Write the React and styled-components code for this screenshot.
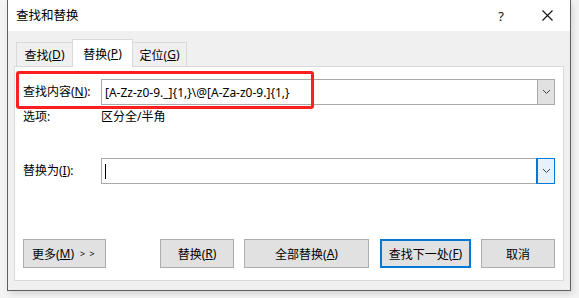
import React from "react";
import styled, { createGlobalStyle } from "styled-components";

const Global = createGlobalStyle`
  html, body { margin: 0; padding: 0; }
  body {
    background: #f3f3f3;
    font-family: "Noto Sans", "Noto Sans CJK SC", sans-serif;
    font-size: 12px;
    color: #000;
  }
`;

const Page = styled.div`
  width: 579px;
  height: 298px;
  padding-left: 7px;
  box-sizing: border-box;
  overflow: hidden;
`;

const Win = styled.div`
  width: 564px;
  height: 291px;
  box-sizing: border-box;
  border: 1px solid #5e5e5e;
  border-top: none;
  background: #f0f0f0;
  display: flex;
  flex-direction: column;
  box-shadow: 2px 3px 6px rgba(0, 0, 0, 0.12);
`;

const TitleBar = styled.div`
  height: 31px;
  background: #fff;
  display: flex;
  align-items: center;
  padding-left: 8px;
  flex-shrink: 0;
`;

const Title = styled.div`
  flex: 1;
  font-size: 12.5px;
  line-height: 16px;
`;

const TitleBtn = styled.div`
  width: 46px;
  height: 31px;
  display: flex;
  align-items: center;
  justify-content: center;
  font-size: 13px;
  color: #111;
`;

const Body = styled.div`
  flex: 1;
  padding: 9px 6px 9px 6px;
  display: flex;
  flex-direction: column;
`;

const Tabs = styled.div`
  display: flex;
  align-items: flex-end;
  padding-left: 2px;
  height: 27px;
  position: relative;
  z-index: 1;
  margin-bottom: -1px;
`;

const Tab = styled.div`
  height: ${(p) => (p.$active ? "28px" : "25px")};
  box-sizing: border-box;
  flex-shrink: 0;
  white-space: nowrap;
  display: flex;
  align-items: center;
  justify-content: center;
  background: ${(p) => (p.$active ? "#fff" : "#f0f0f0")};
  border: 1px solid #d9d9d9;
  border-bottom: ${(p) => (p.$active ? "none" : "1px solid #d9d9d9")};
  margin-left: ${(p) => (p.$first ? "0" : "-1px")};
  width: ${(p) => p.$w}px;
`;

const U = styled.span`
  text-decoration: underline;
  text-underline-offset: 1px;
`;

const Panel = styled.div`
  flex: 1;
  background: #fff;
  border: 1px solid #d9d9d9;
  padding: 12px 7px 12px 8px;
  display: flex;
  flex-direction: column;
  position: relative;
`;

const FieldGrid = styled.div`
  display: grid;
  grid-template-columns: 78px 454px;
  align-items: center;
`;

const Label = styled.div`
  line-height: 16px;
  white-space: nowrap;
`;

const Combo = styled.div`
  height: 26px;
  box-sizing: border-box;
  border: 1px solid #a9a9a9;
  display: flex;
  align-items: stretch;
  background: #fff;
`;

const ComboText = styled.div`
  flex: 1;
  padding-left: 3px;
  display: flex;
  align-items: center;
  font-size: 12px;
  white-space: nowrap;
`;

const Caret = styled.div`
  width: 1px;
  height: 15px;
  background: #000;
`;

const DropBtn = styled.div`
  width: 17px;
  box-sizing: border-box;
  display: flex;
  align-items: center;
  justify-content: center;
  background: ${(p) => (p.$focus ? "#e5f1fb" : "#e1e1e1")};
  border-left: 1px solid ${(p) => (p.$focus ? "#0078d7" : "#a9a9a9")};
  outline: ${(p) => (p.$focus ? "1px solid #0078d7" : "none")};
`;

const OptionsRow = styled(FieldGrid)`
  margin-top: 4px;
  height: 16px;
`;

const ReplaceRow = styled(FieldGrid)`
  margin-top: 33px;
`;

const Buttons = styled.div`
  margin-top: auto;
  display: flex;
  align-items: center;
`;

const Btn = styled.div`
  height: 29px;
  width: ${(p) => p.$w}px;
  margin-left: ${(p) => p.$ml || 0}px;
  flex-shrink: 0;
  white-space: nowrap;
  box-sizing: border-box;
  border: ${(p) => (p.$default ? "2px solid #0078d7" : "1px solid #adadad")};
  background: #e1e1e1;
  display: flex;
  align-items: center;
  justify-content: ${(p) => (p.$left ? "flex-start" : "center")};
  padding-left: ${(p) => (p.$left ? "8px" : "0")};
`;

const Arrows = styled.span`
  font-size: 9px;
  margin-left: 6px;
  letter-spacing: 1px;
`;

const Highlight = styled.div`
  position: absolute;
  left: 1px;
  top: 4px;
  width: 298px;
  height: 38px;
  box-sizing: border-box;
  border: 3px solid #ff1f1f;
  border-radius: 3px;
  pointer-events: none;
`;

const Chevron = () => (
  <svg width="9" height="6" viewBox="0 0 9 6">
    <path d="M1 1 L4.5 4.5 L8 1" fill="none" stroke="#444" strokeWidth="1" />
  </svg>
);

const Close = () => (
  <svg width="11" height="11" viewBox="0 0 11 11">
    <path d="M0.5 0.5 L10.5 10.5 M10.5 0.5 L0.5 10.5" stroke="#111" strokeWidth="1.1" />
  </svg>
);

export default function App() {
  return (
    <>
      <Global />
      <Page>
        <Win>
          <TitleBar>
            <Title>查找和替换</Title>
            <TitleBtn>?</TitleBtn>
            <TitleBtn>
              <Close />
            </TitleBtn>
          </TitleBar>
          <Body>
            <Tabs>
              <Tab $first $w={57}>
                查找(<U>D</U>)
              </Tab>
              <Tab $active $w={61}>
                替换(<U>P</U>)
              </Tab>
              <Tab $w={55}>
                定位(<U>G</U>)
              </Tab>
            </Tabs>
            <Panel>
              <Highlight />
              <FieldGrid>
                <Label>
                  查找内容(<U>N</U>):
                </Label>
                <Combo>
                  <ComboText>[A-Zz-z0-9._]{"{1,}"}\@[A-Za-z0-9.]{"{1,}"}</ComboText>
                  <DropBtn>
                    <Chevron />
                  </DropBtn>
                </Combo>
              </FieldGrid>
              <OptionsRow>
                <Label>选项:</Label>
                <Label>区分全/半角</Label>
              </OptionsRow>
              <ReplaceRow>
                <Label>
                  替换为(<U>I</U>):
                </Label>
                <Combo>
                  <ComboText>
                    <Caret />
                  </ComboText>
                  <DropBtn $focus>
                    <Chevron />
                  </DropBtn>
                </Combo>
              </ReplaceRow>
              <Buttons>
                <Btn $w={83} $left>
                  更多(<U>M</U>)<Arrows>&gt; &gt;</Arrows>
                </Btn>
                <Btn $w={74} $ml={54}>
                  替换(<U>R</U>)
                </Btn>
                <Btn $w={125} $ml={10}>
                  全部替换(<U>A</U>)
                </Btn>
                <Btn $w={91} $ml={11} $default>
                  查找下一处(<U>F</U>)
                </Btn>
                <Btn $w={74} $ml={10}>
                  取消
                </Btn>
              </Buttons>
            </Panel>
          </Body>
        </Win>
      </Page>
    </>
  );
}
